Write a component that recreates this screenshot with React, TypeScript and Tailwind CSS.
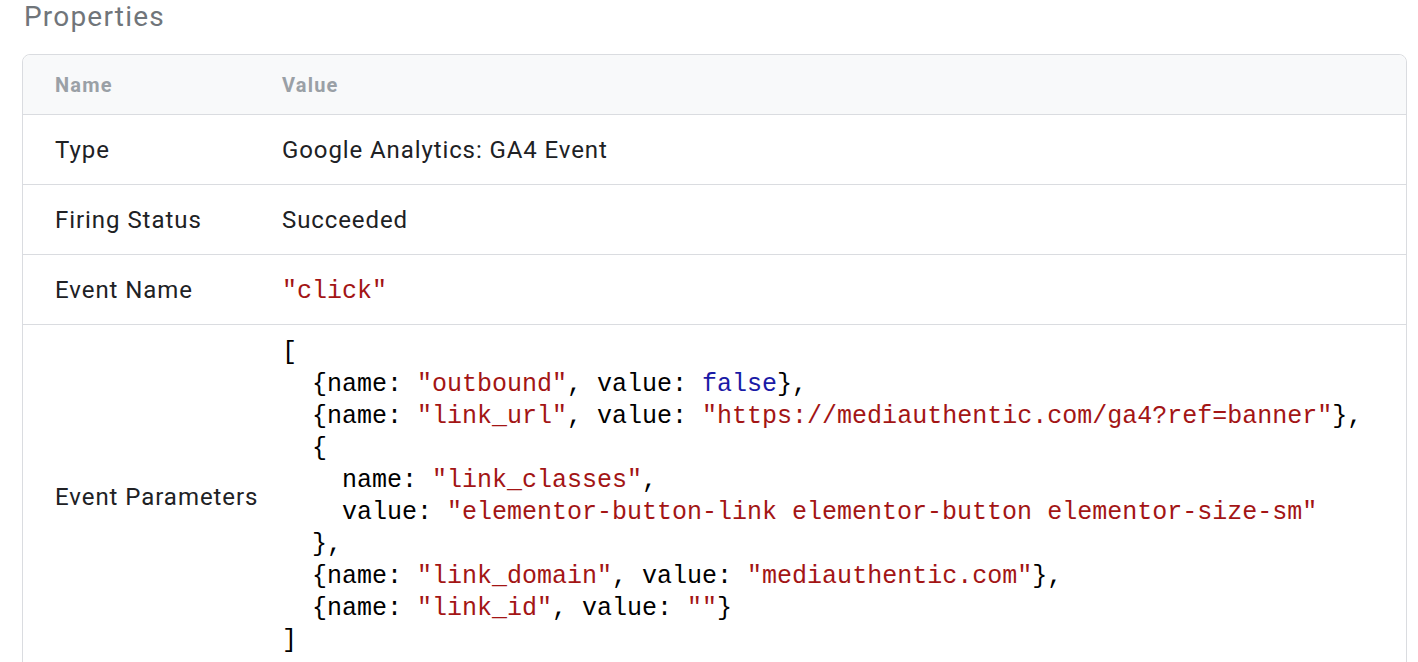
import React from 'react';

const S: React.FC<{ children: React.ReactNode }> = ({ children }) => (
  <span className="text-[#a31515]">{children}</span>
);

const Row: React.FC<{ name: string; children: React.ReactNode; last?: boolean }> = ({
  name,
  children,
  last,
}) => (
  <div className={`flex items-center ${last ? '' : 'border-b border-[#dadce0]'}`}>
    <div className="w-[259px] shrink-0 pl-8 text-[24px] tracking-[0.95px] text-[#202124]">{name}</div>
    <div className="flex-1 text-[24px] tracking-[0.9px] text-[#202124]">{children}</div>
  </div>
);

const App: React.FC = () => {
  const mono = "font-['Liberation_Mono','Courier_New',monospace] tracking-normal";

  return (
    <div className="min-h-screen bg-white pl-[22px] pr-[11px] font-['Roboto',sans-serif]">
      <h2 className="pl-[2px] text-[28px] leading-[34px] tracking-[1.2px] text-[#70757a]">Properties</h2>

      <div className="mt-[20px] rounded-t-[8px] border border-[#dadce0]">
        <div className="flex h-[60px] items-center rounded-t-[8px] border-b border-[#dadce0] bg-[#f8f9fa] text-[20px] font-bold tracking-[1.2px] text-[#9aa0a6]">
          <div className="w-[259px] shrink-0 pl-8">Name</div>
          <div className="flex-1">Value</div>
        </div>

        <div className="[&>div]:min-h-[70px]">
          <Row name="Type">Google Analytics: GA4 Event</Row>
          <Row name="Firing Status">Succeeded</Row>
          <Row name="Event Name">
            <span className={`${mono} pt-[3px] text-[25px] leading-[32px]`}>
              <S>"click"</S>
            </span>
          </Row>
          <Row name="Event Parameters" last>
            <pre className={`${mono} pt-[12px] pb-[11px] text-[25px] leading-[32px] text-black`}>
              {'[\n  {name: '}
              <S>"outbound"</S>
              {', value: '}
              <span className="text-[#1a1aa6]">false</span>
              {'},\n  {name: '}
              <S>"link_url"</S>
              {', value: '}
              <S>"https://mediauthentic.com/ga4?ref=banner"</S>
              {'},\n  {\n    name: '}
              <S>"link_classes"</S>
              {',\n    value: '}
              <S>"elementor-button-link elementor-button elementor-size-sm"</S>
              {'\n  },\n  {name: '}
              <S>"link_domain"</S>
              {', value: '}
              <S>"mediauthentic.com"</S>
              {'},\n  {name: '}
              <S>"link_id"</S>
              {', value: '}
              <S>""</S>
              {'}\n]'}
            </pre>
          </Row>
        </div>
      </div>
    </div>
  );
};

export default App;
